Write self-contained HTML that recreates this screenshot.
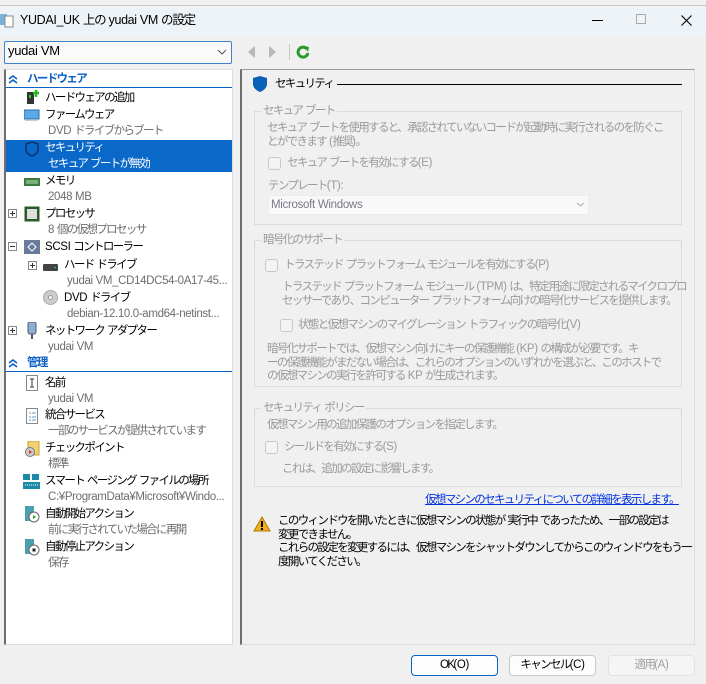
<!DOCTYPE html>
<html><head><meta charset="utf-8"><style>
*{margin:0;padding:0;box-sizing:border-box}
body{width:706px;height:684px;background:#f0f0f0;position:relative;overflow:hidden;font-family:"Liberation Sans","Noto Sans CJK JP",sans-serif;font-size:11.5px;letter-spacing:-1.65px;color:#000}
i{font-style:normal;letter-spacing:-0.35px}
.a{position:absolute;white-space:nowrap;line-height:14px}
.g{color:#6d6d6d}
.d{color:#9a9a9a}
.box{position:absolute;border:1px solid #dcdcdc}
.leg{position:absolute;background:#f0f0f0;padding:0 2px;color:#9a9a9a;line-height:14px;white-space:nowrap}
.cb{position:absolute;width:13px;height:13px;border:1px solid #c8c8c8;border-radius:3px;background:#f4f4f4}
.btn{position:absolute;top:655px;height:21px;width:87px;border:1px solid #c9c9c9;border-radius:4px;background:#fdfdfd;text-align:center;line-height:19px}
.ic{position:absolute}
.pm{position:absolute;width:9px;height:9px;border:1px solid #888}
</style></head><body>
<div style="position:absolute;left:0;top:5px;width:706px;height:1px;background:#c8c8c8"></div>
<div style="position:absolute;left:0;top:6px;width:706px;height:30px;background:#eef3f8"></div>
<svg class="ic" style="left:0;top:12px" width="14" height="16"><rect x="0" y="2" width="7" height="11" fill="#7bb3d8"/><rect x="5" y="4" width="8" height="11" fill="#fff" stroke="#888"/></svg>
<div class="a" style="left:20px;top:13px;font-size:12.5px;letter-spacing:-1.2px"><i>YUDAI_UK </i>上の<i> yudai VM </i>の設定</div>
<div style="position:absolute;left:592px;top:20px;width:11px;height:1px;background:#000"></div>
<div style="position:absolute;left:636px;top:14px;width:10px;height:10px;border:1px solid #aaa"></div>
<svg class="ic" style="left:681px;top:15px" width="11" height="11"><path d="M0.5 0.5L10.5 10.5M10.5 0.5L0.5 10.5" stroke="#000" stroke-width="1.1"/></svg>
<div style="position:absolute;left:4px;top:41px;width:228px;height:23px;border:1px solid #3c82c8;border-radius:2px;background:#fafafa"></div>
<div class="a" style="left:8px;top:44px;font-size:13px;letter-spacing:-0.3px">yudai VM</div>
<svg class="ic" style="left:217px;top:49px" width="10" height="6"><path d="M1 1L5 5L9 1" stroke="#555" fill="none"/></svg>
<svg class="ic" style="left:245px;top:45px" width="40" height="14"><path d="M10 1L3 7L10 13Z" fill="#b8b8b8"/><path d="M24 1L31 7L24 13Z" fill="#b8b8b8"/></svg>
<div style="position:absolute;left:289px;top:44px;width:1px;height:16px;background:#c8c8c8"></div>
<svg class="ic" style="left:296px;top:45px" width="14" height="14"><path d="M11 4A5 5 0 1 0 12 8" stroke="#2a9a2a" stroke-width="3" fill="none"/><path d="M8 1L13 2L12 7Z" fill="#2a9a2a"/></svg>
<div style="position:absolute;left:4px;top:69px;width:229px;height:576px;background:#fff;border:1px solid #dcdcdc;border-left:2px solid #6e6e6e"></div>
<div style="position:absolute;left:6px;top:87px;width:226px;height:1px;background:#0a64c8"></div>
<div style="position:absolute;left:6px;top:371px;width:226px;height:1px;background:#0a64c8"></div>
<div style="position:absolute;left:6px;top:140px;width:226px;height:32px;background:#0a68c8"></div>
<svg class="ic" style="left:8px;top:75px" width="10" height="9"><path d="M1 4L5 1L9 4M1 8L5 5L9 8" stroke="#0a5fc4" stroke-width="1.6" fill="none"/></svg>
<div class="a" style="left:27px;top:72px;color:#0a5fc4;font-weight:bold">ハードウェア</div>
<svg class="ic" style="left:8px;top:359px" width="10" height="9"><path d="M1 4L5 1L9 4M1 8L5 5L9 8" stroke="#0a5fc4" stroke-width="1.6" fill="none"/></svg>
<div class="a" style="left:27px;top:356px;color:#0a5fc4;font-weight:bold">管理</div>
<svg class="ic" style="left:26px;top:90px" width="14" height="16"><rect x="1" y="2" width="7" height="12" fill="#333"/><rect x="3" y="5" width="2" height="3" fill="#3c3"/><path d="M10 0v7M7 3h6" stroke="#2b2" stroke-width="2.5"/></svg>
<div class="a" style="left:45px;top:91px">ハードウェアの追加</div>
<svg class="ic" style="left:24px;top:109px" width="16" height="13"><rect x="0" y="1" width="15" height="9" fill="#5aaae8" stroke="#2a6aa8"/><rect x="1" y="11" width="13" height="1" fill="#ccc"/></svg>
<div class="a" style="left:45px;top:108px">ファームウェア</div>
<div class="a g" style="left:48px;top:124px"><i>DVD </i>ドライブからブート</div>
<svg class="ic" style="left:25px;top:141px" width="14" height="16"><path d="M7 1L13 3V8C13 12 10 14 7 15C4 14 1 12 1 8V3Z" fill="none" stroke="#0a2a5a" stroke-width="1.3"/></svg>
<div class="a" style="left:45px;top:141px;color:#fff">セキュリティ</div>
<div class="a" style="left:48px;top:157px;color:#fff">セキュア<i> </i>ブートが無効</div>
<svg class="ic" style="left:24px;top:177px" width="16" height="10"><rect x="0" y="1" width="16" height="8" fill="#3a7a3a"/><rect x="2" y="3" width="12" height="4" fill="#7ab07a"/></svg>
<div class="a" style="left:45px;top:174px">メモリ</div>
<div class="a g" style="left:48px;top:190px"><i>2048 MB</i></div>
<div class="pm" style="left:8px;top:209px"><svg style="position:absolute;left:0;top:0" width="7" height="7"><path d="M1 3.5h5M3.5 1v5" stroke="#333"/></svg></div>
<svg class="ic" style="left:24px;top:206px" width="16" height="16"><rect x="0.5" y="0.5" width="15" height="15" fill="#2a5a2a"/><rect x="3" y="3" width="10" height="10" fill="#ddd"/></svg>
<div class="a" style="left:45px;top:207px">プロセッサ</div>
<div class="a g" style="left:48px;top:223px"><i>8 </i>個の仮想プロセッサ</div>
<div class="pm" style="left:8px;top:242px"><svg style="position:absolute;left:0;top:0" width="7" height="7"><path d="M1 3.5h5" stroke="#333"/></svg></div>
<svg class="ic" style="left:24px;top:240px" width="16" height="14"><rect x="0" y="0" width="16" height="14" fill="#6a7a9a"/><path d="M8 3L12 7L8 11L4 7Z" fill="none" stroke="#fff"/></svg>
<div class="a" style="left:45px;top:240px"><i>SCSI </i>コントローラー</div>
<div class="pm" style="left:28px;top:261px"><svg style="position:absolute;left:0;top:0" width="7" height="7"><path d="M1 3.5h5M3.5 1v5" stroke="#333"/></svg></div>
<svg class="ic" style="left:43px;top:264px" width="15" height="8"><rect x="0" y="0" width="15" height="7" rx="1" fill="#444"/><rect x="11" y="3" width="2" height="1" fill="#3c3"/></svg>
<div class="a" style="left:64px;top:258px">ハード<i> </i>ドライブ</div>
<div class="a g" style="left:67px;top:274px"><i>yudai VM_CD14DC54-0A17-45...</i></div>
<svg class="ic" style="left:43px;top:290px" width="15" height="15"><circle cx="7.5" cy="7.5" r="7" fill="#ccc" stroke="#aaa"/><circle cx="7.5" cy="7.5" r="2" fill="#fff" stroke="#999"/></svg>
<div class="a" style="left:64px;top:291px"><i>DVD </i>ドライブ</div>
<div class="a g" style="left:67px;top:307px"><i>debian-12.10.0-amd64-netinst...</i></div>
<div class="pm" style="left:8px;top:326px"><svg style="position:absolute;left:0;top:0" width="7" height="7"><path d="M1 3.5h5M3.5 1v5" stroke="#333"/></svg></div>
<svg class="ic" style="left:27px;top:322px" width="10" height="17"><rect x="1" y="0" width="8" height="12" rx="2" fill="#8ab0d0" stroke="#557"/><rect x="4" y="12" width="2" height="5" fill="#557"/></svg>
<div class="a" style="left:45px;top:324px">ネットワーク<i> </i>アダプター</div>
<div class="a g" style="left:48px;top:340px"><i>yudai VM</i></div>
<svg class="ic" style="left:26px;top:375px" width="12" height="16"><rect x="0.5" y="0.5" width="11" height="15" fill="#fff" stroke="#888"/><path d="M4 4h4M6 4v8M4 12h4" stroke="#333"/></svg>
<div class="a" style="left:45px;top:376px">名前</div>
<div class="a g" style="left:48px;top:392px"><i>yudai VM</i></div>
<svg class="ic" style="left:26px;top:408px" width="12" height="16"><rect x="0.5" y="0.5" width="11" height="15" fill="#fff" stroke="#888"/><path d="M3 5h2M6 5h4M3 9h2M6 9h4M3 12h2M6 12h4" stroke="#69c"/></svg>
<div class="a" style="left:45px;top:408px">統合サービス</div>
<div class="a g" style="left:48px;top:424px">一部のサービスが提供されています</div>
<svg class="ic" style="left:24px;top:441px" width="16" height="16"><rect x="4" y="0" width="11" height="14" fill="#f0d070" stroke="#c9a030"/><circle cx="6" cy="11" r="4.5" fill="#ccc" stroke="#777"/><path d="M5 9l3 2l-3 2z" fill="#c33"/></svg>
<div class="a" style="left:45px;top:441px">チェックポイント</div>
<div class="a g" style="left:48px;top:457px">標準</div>
<svg class="ic" style="left:23px;top:474px" width="18" height="15"><rect x="0" y="0" width="7" height="6" fill="#1a8aa8"/><rect x="9" y="0" width="7" height="6" fill="#1a8aa8"/><rect x="0" y="8" width="17" height="7" fill="#1a8aa8"/><path d="M2 11h13" stroke="#fff" stroke-dasharray="1 1"/></svg>
<div class="a" style="left:45px;top:474px">スマート<i> </i>ページング<i> </i>ファイルの場所</div>
<div class="a g" style="left:48px;top:490px"><i>C:¥ProgramData¥Microsoft¥Windo...</i></div>
<svg class="ic" style="left:25px;top:506px" width="15" height="17"><rect x="0" y="0" width="9" height="15" fill="#4aa0b0"/><circle cx="9" cy="11" r="5" fill="#fff" stroke="#666"/><path d="M8 9l3 2l-3 2z" fill="#2a2"/></svg>
<div class="a" style="left:45px;top:507px">自動開始アクション</div>
<div class="a g" style="left:48px;top:523px">前に実行されていた場合に再開</div>
<svg class="ic" style="left:25px;top:539px" width="15" height="17"><rect x="0" y="0" width="9" height="15" fill="#4aa0b0"/><circle cx="9" cy="11" r="5" fill="#fff" stroke="#666"/><rect x="7.5" y="9.5" width="3" height="3" fill="#222"/></svg>
<div class="a" style="left:45px;top:540px">自動停止アクション</div>
<div class="a g" style="left:48px;top:556px">保存</div>
<div style="position:absolute;left:240px;top:69px;width:455px;height:576px;border:1px solid #dcdcdc;border-left:2px solid #6e6e6e;border-top:1px solid #9a9a9a"></div>
<svg class="ic" style="left:252px;top:75px" width="16" height="18"><path d="M8 1L15 3V9C15 13 11 16 8 17C5 16 1 13 1 9V3Z" fill="#0a5fb8"/></svg>
<div class="a" style="left:275px;top:77px">セキュリティ</div>
<div style="position:absolute;left:337px;top:84px;width:345px;height:1px;background:#000"></div>
<div class="box" style="left:254px;top:111px;width:428px;height:114px"></div>
<div class="leg" style="left:261px;top:104px">セキュア<i> </i>ブート</div>
<div class="a d" style="left:267px;top:121px;line-height:14px">セキュア<i> </i>ブートを使用すると、承認されていないコードが起動時に実行されるのを防ぐこ<br>とができます<i> (</i>推奨<i>)</i>。</div>
<div class="cb" style="left:268px;top:157px"></div>
<div class="a d" style="left:287px;top:156px">セキュア<i> </i>ブートを有効にする<i>(E)</i></div>
<div class="a d" style="left:268px;top:179px">テンプレート<i>(T):</i></div>
<div style="position:absolute;left:268px;top:195px;width:321px;height:20px;background:#f9f9f9;border:1px solid #ececec"></div>
<div class="a" style="left:271px;top:198px;color:#7a7a8a;letter-spacing:-0.3px">Microsoft Windows</div>
<svg class="ic" style="left:576px;top:202px" width="9" height="5"><path d="M1 1L4.5 4L8 1" stroke="#aaa" fill="none"/></svg>
<div class="box" style="left:254px;top:240px;width:428px;height:147px"></div>
<div class="leg" style="left:261px;top:233px">暗号化のサポート</div>
<div class="cb" style="left:265px;top:259px"></div>
<div class="a d" style="left:284px;top:258px">トラステッド<i> </i>プラットフォーム<i> </i>モジュールを有効にする<i>(P)</i></div>
<div class="a d" style="left:282px;top:280px">トラステッド<i> </i>プラットフォーム<i> </i>モジュール<i> (TPM) </i>は、特定用途に限定されるマイクロプロ<br>セッサーであり、コンピューター<i> </i>プラットフォーム向けの暗号化サービスを提供します。</div>
<div class="cb" style="left:280px;top:319px"></div>
<div class="a d" style="left:298px;top:318px">状態と仮想マシンのマイグレーション<i> </i>トラフィックの暗号化<i>(V)</i></div>
<div class="a d" style="left:267px;top:343px;line-height:13.5px">暗号化サポートでは、仮想マシン向けにキーの保護機能<i> (KP) </i>の構成が必要です。キ<br>ーの保護機能がまだない場合は、これらのオプションのいずれかを選ぶと、このホストで<br>の仮想マシンの実行を許可する<i> KP </i>が生成されます。</div>
<div class="box" style="left:254px;top:408px;width:428px;height:79px"></div>
<div class="leg" style="left:261px;top:401px">セキュリティ<i> </i>ポリシー</div>
<div class="a d" style="left:267px;top:418px">仮想マシン用の追加保護のオプションを指定します。</div>
<div class="cb" style="left:265px;top:441px"></div>
<div class="a d" style="left:284px;top:440px">シールドを有効にする<i>(S)</i></div>
<div class="a d" style="left:282px;top:462px">これは、追加の設定に影響します。</div>
<div class="a" style="left:425px;top:493px;color:#0033dd;text-decoration:underline">仮想マシンのセキュリティについての詳細を表示します。</div>
<svg class="ic" style="left:253px;top:516px" width="18" height="16"><path d="M9 1L17 15H1Z" fill="#f0b020" stroke="#b07a00"/><path d="M9 5v6" stroke="#000" stroke-width="2"/><rect x="8" y="12" width="2" height="2"/></svg>
<div class="a" style="left:278px;top:515px;line-height:13.7px">このウィンドウを開いたときに仮想マシンの状態が<i> </i>実行中<i> </i>であったため、一部の設定は<br>変更できません。<br>これらの設定を変更するには、仮想マシンをシャットダウンしてからこのウィンドウをもう一<br>度開いてください。</div>
<div class="btn" style="left:411px;border:1px solid #0a64c8">OK<i>(O)</i></div>
<div class="btn" style="left:509px">キャンセル<i>(C)</i></div>
<div class="btn" style="left:608px;color:#a0a0a0;background:#f5f5f5;border-color:#e3e3e3">適用<i>(A)</i></div>
</body></html>
